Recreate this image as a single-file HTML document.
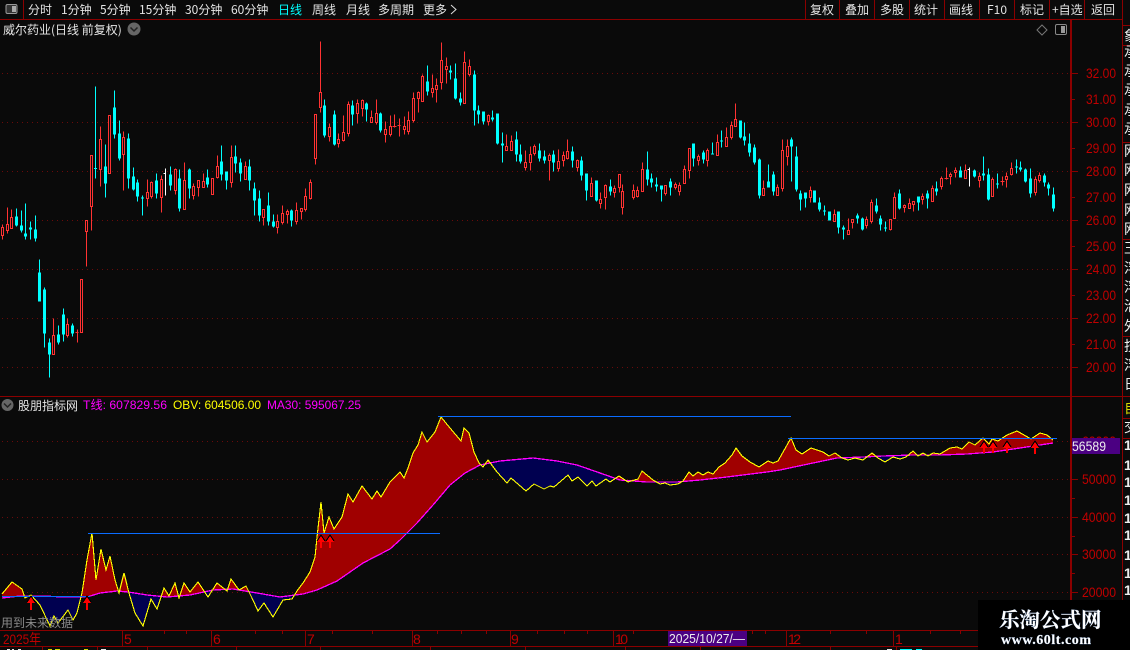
<!DOCTYPE html>
<html><head><meta charset="utf-8"><style>
html,body{margin:0;padding:0;background:#0a0a0a;width:1130px;height:650px;overflow:hidden}
svg{display:block;position:absolute;left:0;top:0}
text{font-family:"Liberation Sans","Noto Sans CJK SC",sans-serif;font-size:12px}
.c{font-family:"WenQuanYi Zen Hei","Noto Sans CJK SC","Liberation Sans",sans-serif;fill:#e4e4e4;font-size:12px}
.a{fill:#c00000;font-size:14px}
.w{font-family:"WenQuanYi Zen Hei","Noto Sans CJK SC",sans-serif;fill:#eee;font-size:14px}
</style></head><body>
<svg width="1130" height="650" viewBox="0 0 1130 650">
<defs>
<clipPath id="am"><path d="M2 598L20 596L40 596L67 597L87 597L100 593L117 591L128 592L147 595L167 597L190 595L213 590L233 589L257 593L280 597L303 594L317 590L337 581L363 563L390 549L400 540L417 523L433 505L450 485L465 473L480 465L500 461L533 458L557 461L577 465L600 473L620 480L647 482L677 482L700 480L727 477L767 472L780 470L813 463L837 458L863 457L883 456L913 455L940 455L967 454L993 452L1020 448L1053 443V397H2Z"/></clipPath>
<clipPath id="bm"><path d="M2 598L20 596L40 596L67 597L87 597L100 593L117 591L128 592L147 595L167 597L190 595L213 590L233 589L257 593L280 597L303 594L317 590L337 581L363 563L390 549L400 540L417 523L433 505L450 485L465 473L480 465L500 461L533 458L557 461L577 465L600 473L620 480L647 482L677 482L700 480L727 477L767 472L780 470L813 463L837 458L863 457L883 456L913 455L940 455L967 454L993 452L1020 448L1053 443V630H2Z"/></clipPath>
</defs>
<rect width="1130" height="650" fill="#0a0a0a"/>

<!-- grid -->
<g stroke="#6b0a0a" stroke-dasharray="1 4" fill="none" shape-rendering="crispEdges">
<path d="M2 73.500H1070M2 122.500H1070M2 171.500H1070M2 220.500H1070M2 269.500H1070M2 318.500H1070M2 367.500H1070M2 441.500H1070M2 479.500H1070M2 517.500H1070M2 554.500H1070M2 592.500H1070"/>
</g>

<!-- candles -->
<g transform="translate(.5 .5)" fill="none" shape-rendering="crispEdges">
<path stroke="#00ffff" d="M16 208V226M21 210V232M25 203V239M30 221V239M35 215V241M39 259V301M44 287V347M49 338V377M58 325V344M63 308V341M72 323V336M95 86V178M105 144V197M114 90V138M119 120V160M128 133V188M133 167V190M137 179V201M142 195V215M156 173V198M170 166V190M179 169V211M189 168V198M207 169V187M221 145V180M226 171V189M235 145V172M240 158V181M249 159V190M254 182V215M259 190V221M268 192V225M273 214V227M291 209V226M324 99V137M334 110V145M352 100V125M366 102V121M380 112V132M427 65V95M450 65V79M455 63V99M460 92V105M474 70V125M478 105V123M483 111V124M492 110V121M497 113V144M502 132V162M516 131V161M520 144V163M539 143V161M544 150V163M553 150V171M572 146V167M581 156V180M586 173V200M596 180V201M610 179V195M647 151V185M651 173V187M656 177V191M661 185V201M670 178V195M693 143V166M703 150V163M712 142V154M721 130V147M740 120V138M744 122V145M749 133V156M754 144V164M759 158V198M768 164V187M773 171V195M791 137V181M796 146V191M800 190V210M805 192V207M814 190V202M819 197V211M824 205V215M838 211V233M843 225V239M857 213V223M862 217V230M876 198V213M880 215V230M885 221V231M899 189V209M918 196V210M927 190V208M936 181V195M960 166V177M974 169V177M983 156V180M988 168V200M997 173V188M1016 159V173M1020 161V171M1025 168V182M1030 168V197M1044 173V186M1048 182V195M1053 187V211"/>
<path stroke="#00ffff" stroke-width="3" d="M16 216V225M21 225V230M25 233V236M30 227V229M35 229V238M39 272V301M44 289V333M49 342V354M58 334V342M63 314V334M72 325V333M95 167.500V168.500M105 166V183M114 107V134M119 133V158M128 138V178M133 176V189M137 182V196M142 197V198M156 180V193M170 174V185M179 178V208M189 169V188M207 177V184M221 161V174M226 171V180M235 156V163M240 162V173M249 166V180M254 188V200M259 198V215M268 205V221M273 221V226M291 210V220M324 105V135M334 114V144M352 105V114M366 103V109M380 113V130M427 81V91M450 70V72M455 78V98M460 98V102M474 74V110M478 110V114M483 111V121M492 117V119M497 113V143M502 143V145M516 139V154M520 154V161M539 150V158M544 156V160M553 154V162M572 151V160M581 160V175M586 173V190M596 180V200M610 186V191M647 169V179M651 178V182M656 184V186M661 185V189M670 181V187M693 143V158M703 152V159M712 153V154M721 140V141M740 120V137M744 136V140M749 143V152M754 147V162M759 159V195M768 181V187M773 174V191M791 139V146M796 156V189M800 193V199M805 192V198M814 190V202M819 202V209M824 210V211M829 211V220M838 211V227M843 227V229M857 215V218M862 218V229M876 205V211M880 218V224M885 227V228M899 193V208M918 196V202M927 193V198M936 188V191M960 170V177M974 170V176M983 173V175M988 174V199M997 183V184M1016 166V167M1020 167V169M1025 169V181M1030 178V193M1044 175V182M1048 184V188M1053 194V208"/>
<path stroke="#ffffff" d="M165 168V195M163 173H165M969 167V186M967 169H969"/>
<path stroke="#ff3232" d="M2 224V239M7 207V233M11 209V228M53 318V354M67 318V337M77 329V342M75 332H78M81 279V332M86 220V266M91 155V230M100 126V186M109 115V173M123 131V190M147 179V206M151 181V198M161 175V212M175 168V194M184 162V209M193 183V199M198 180V196M203 173V187M212 178V194M217 155V178M231 145V187M245 161V179M263 209V225M277 214V233M282 205V224M287 209V223M296 202V224M301 208V219M305 188V211M310 179V199M315 114V164M320 41V112M329 123V141M338 133V147M343 115V141M348 101V136M357 99V123M362 99V116M371 110V122M376 99V124M385 121V142M390 115V136M394 114V127M392 126H396M399 118V136M397 125H400M404 116V134M408 111V134M413 92V122M418 91V112M422 74V101M432 74V97M436 78V102M441 42V89M446 57V83M464 51V103M469 59V76M488 114V125M506 134V150M511 135V150M525 150V170M530 146V170M534 144V155M549 153V180M558 149V171M563 151V166M567 139V159M577 159V171M591 177V196M600 192V208M605 184V209M614 185V197M619 174V192M622 184V214M633 184V199M637 186V197M642 162V191M665 185V195M675 182V189M679 182V195M684 165V183M689 148V178M698 154V165M707 148V166M717 134V155M726 127V146M731 121V139M735 103V126M763 180V195M777 184V195M782 139V191M787 139V165M810 186V202M834 209V221M848 218V234M852 219V228M866 216V228M871 199V223M890 219V230M894 192V218M904 204V212M909 198V208M913 201V211M922 193V204M932 185V201M941 176V189M946 167V179M944 178H948M950 172V184M955 167V177M965 164V178M979 172V187M992 177V196M1002 176V185M1000 181H1004M1006 172V187M1011 162V175M1035 176V195M1039 172V182"/>
<path stroke="#ff3232" fill="#0a0a0a" d="M1 227h2v8h-2zM6 224h2v6h-2zM10 217h2v11h-2zM52 335h2v19h-2zM66 324h2v11h-2zM80 279h2v53h-2zM85 220h2v11h-2zM90 155h2v51h-2zM99 139h2v30h-2zM108 115h2v58h-2zM122 137h2v17h-2zM146 192h2v6h-2zM150 182h2v14h-2zM160 179h2v18h-2zM174 169h2v21h-2zM183 180h2v29h-2zM192 186h2v9h-2zM197 180h2v7h-2zM202 181h2v6h-2zM211 178h2v16h-2zM216 166h2v11h-2zM230 157h2v25h-2zM244 166h2v13h-2zM262 209h2v8h-2zM276 221h2v6h-2zM281 213h2v9h-2zM286 211h2v3h-2zM295 210h2v11h-2zM300 208h2v3h-2zM304 196h2v13h-2zM309 182h2v16h-2zM314 114h2v44h-2zM319 92h2v15h-2zM328 127h2v9h-2zM337 139h2v4h-2zM342 132h2v8h-2zM347 104h2v29h-2zM356 103h2v10h-2zM361 100h2v8h-2zM370 117h2v5h-2zM375 113h2v9h-2zM384 129h2v5h-2zM389 126h2v8h-2zM403 126h2v3h-2zM407 120h2v11h-2zM412 98h2v22h-2zM417 92h2v6h-2zM421 76h2v25h-2zM431 88h2v4h-2zM435 85h2v4h-2zM440 60h2v22h-2zM445 66h2v3h-2zM463 62h2v41h-2zM468 66h2v8h-2zM487 115h2v6h-2zM505 146h2v4h-2zM510 141h2v9h-2zM524 162h2v5h-2zM529 154h2v8h-2zM533 146h2v7h-2zM548 155h2v5h-2zM557 161h2v7h-2zM562 155h2v5h-2zM566 151h2v7h-2zM576 160h2v7h-2zM590 183h2v13h-2zM599 199h2v4h-2zM604 185h2v12h-2zM613 188h2v4h-2zM618 174h2v13h-2zM621 191h2v16h-2zM632 190h2v7h-2zM636 190h2v6h-2zM641 169h2v22h-2zM664 185h2v8h-2zM674 184h2v3h-2zM678 185h2v6h-2zM683 169h2v14h-2zM688 148h2v22h-2zM697 156h2v4h-2zM706 150h2v10h-2zM716 142h2v13h-2zM725 137h2v9h-2zM730 125h2v12h-2zM734 119h2v7h-2zM762 188h2v7h-2zM776 187h2v8h-2zM781 150h2v38h-2zM786 146h2v10h-2zM809 190h2v7h-2zM833 214h2v7h-2zM847 230h2v4h-2zM851 219h2v3h-2zM865 219h2v6h-2zM870 202h2v19h-2zM889 219h2v10h-2zM893 197h2v21h-2zM903 205h2v2h-2zM908 203h2v5h-2zM912 201h2v3h-2zM921 196h2v3h-2zM931 188h2v13h-2zM940 178h2v8h-2zM949 174h2v2h-2zM954 170h2v2h-2zM964 170h2v8h-2zM978 176h2v4h-2zM991 179h2v17h-2zM1005 176h2v3h-2zM1010 168h2v6h-2zM1034 179h2v13h-2zM1038 175h2v5h-2z"/>
</g>

<!-- indicator fills -->
<g shape-rendering="crispEdges">
<path clip-path="url(#am)" fill="#a00000" d="M2 594L12 582L22 589L25 598L31 595L40 605L50 626L54 616L58 623L68 610L73 620L77 613L82 593L87 560L92 533L96 580L101 549L106 570L110 556L115 580L119 593L124 573L129 593L135 613L143 626L151 599L157 609L164 588L169 596L175 583L179 598L184 583L190 592L198 582L208 597L217 583L227 591L231 579L239 590L246 586L252 598L258 611L264 603L273 617L283 600L292 599L297 591L303 583L310 572L315 557L317 537L321 502L324 533L329 517L334 529L342 517L348 494L353 502L362 486L372 499L377 491L381 497L390 482L400 472L404 478L408 468L413 453L418 445L422 432L427 442L435 432L441 417L450 428L461 441L464 428L469 433L474 452L479 463L483 467L488 460L497 472L507 483L511 478L526 491L534 484L544 489L550 486L554 487L568 475L572 481L578 477L587 486L592 481L596 486L606 479L610 482L619 476L628 482L638 479L642 471L653 480L660 484L665 483L670 485L678 484L683 481L689 472L693 476L698 472L703 475L708 472L713 474L719 467L725 463L732 455L736 448L742 456L750 462L759 467L768 461L773 463L778 461L791 438L796 450L802 454L811 448L823 452L829 456L835 453L842 458L848 460L855 458L863 460L872 453L878 458L885 462L893 457L900 459L906 457L913 451L918 456L923 453L928 456L933 453L940 454L950 448L957 447L962 449L969 442L975 445L983 438L989 444L992 439L998 441L1007 435L1017 431L1031 439L1040 433L1047 435L1053 440V630H2Z"/>
<path clip-path="url(#bm)" fill="#000050" d="M2 594L12 582L22 589L25 598L31 595L40 605L50 626L54 616L58 623L68 610L73 620L77 613L82 593L87 560L92 533L96 580L101 549L106 570L110 556L115 580L119 593L124 573L129 593L135 613L143 626L151 599L157 609L164 588L169 596L175 583L179 598L184 583L190 592L198 582L208 597L217 583L227 591L231 579L239 590L246 586L252 598L258 611L264 603L273 617L283 600L292 599L297 591L303 583L310 572L315 557L317 537L321 502L324 533L329 517L334 529L342 517L348 494L353 502L362 486L372 499L377 491L381 497L390 482L400 472L404 478L408 468L413 453L418 445L422 432L427 442L435 432L441 417L450 428L461 441L464 428L469 433L474 452L479 463L483 467L488 460L497 472L507 483L511 478L526 491L534 484L544 489L550 486L554 487L568 475L572 481L578 477L587 486L592 481L596 486L606 479L610 482L619 476L628 482L638 479L642 471L653 480L660 484L665 483L670 485L678 484L683 481L689 472L693 476L698 472L703 475L708 472L713 474L719 467L725 463L732 455L736 448L742 456L750 462L759 467L768 461L773 463L778 461L791 438L796 450L802 454L811 448L823 452L829 456L835 453L842 458L848 460L855 458L863 460L872 453L878 458L885 462L893 457L900 459L906 457L913 451L918 456L923 453L928 456L933 453L940 454L950 448L957 447L962 449L969 442L975 445L983 438L989 444L992 439L998 441L1007 435L1017 431L1031 439L1040 433L1047 435L1053 440V397H2Z"/>
<path fill="none" stroke="#ff00ff" stroke-width="1.300" d="M2 598L20 596L40 596L67 597L87 597L100 593L117 591L128 592L147 595L167 597L190 595L213 590L233 589L257 593L280 597L303 594L317 590L337 581L363 563L390 549L400 540L417 523L433 505L450 485L465 473L480 465L500 461L533 458L557 461L577 465L600 473L620 480L647 482L677 482L700 480L727 477L767 472L780 470L813 463L837 458L863 457L883 456L913 455L940 455L967 454L993 452L1020 448L1053 443"/>
<path fill="none" stroke="#ffff00" stroke-width="1.100" d="M2 594L12 582L22 589L25 598L31 595L40 605L50 626L54 616L58 623L68 610L73 620L77 613L82 593L87 560L92 533L96 580L101 549L106 570L110 556L115 580L119 593L124 573L129 593L135 613L143 626L151 599L157 609L164 588L169 596L175 583L179 598L184 583L190 592L198 582L208 597L217 583L227 591L231 579L239 590L246 586L252 598L258 611L264 603L273 617L283 600L292 599L297 591L303 583L310 572L315 557L317 537L321 502L324 533L329 517L334 529L342 517L348 494L353 502L362 486L372 499L377 491L381 497L390 482L400 472L404 478L408 468L413 453L418 445L422 432L427 442L435 432L441 417L450 428L461 441L464 428L469 433L474 452L479 463L483 467L488 460L497 472L507 483L511 478L526 491L534 484L544 489L550 486L554 487L568 475L572 481L578 477L587 486L592 481L596 486L606 479L610 482L619 476L628 482L638 479L642 471L653 480L660 484L665 483L670 485L678 484L683 481L689 472L693 476L698 472L703 475L708 472L713 474L719 467L725 463L732 455L736 448L742 456L750 462L759 467L768 461L773 463L778 461L791 438L796 450L802 454L811 448L823 452L829 456L835 453L842 458L848 460L855 458L863 460L872 453L878 458L885 462L893 457L900 459L906 457L913 451L918 456L923 453L928 456L933 453L940 454L950 448L957 447L962 449L969 442L975 445L983 438L989 444L992 439L998 441L1007 435L1017 431L1031 439L1040 433L1047 435L1053 440"/>
<rect x="2" y="596" width="88" height="1" fill="#0a6cff"/>
<rect x="88" y="533" width="352" height="1" fill="#0a6cff"/>
<rect x="438" y="416" width="353" height="1" fill="#0a6cff"/>
<rect x="788" y="438" width="269" height="1" fill="#0a6cff"/>
<!-- arrows -->
<path fill="none" stroke="#000" d="M27 602L31 596L35 602M83 602L87 596L91 602M317 541L321 535L325 541M326 541L330 535L334 541M980 447L984 441L988 447M989 447L993 441L997 447M1003 447L1007 441L1011 447M1031 447L1035 441L1039 447"/>
<path fill="#ff0000" d="M27 603L31 597L35 603H32V610H30V603ZM83 603L87 597L91 603H88V610H86V603ZM317 542L321 536L325 542H322V548H320V542ZM326 542L330 536L334 542H331V548H329V542ZM980 448L984 442L988 448H985V453H983V448ZM989 448L993 442L997 448H994V453H992V448ZM1003 448L1007 442L1011 448H1008V453H1006V448ZM1031 448L1035 442L1039 448H1036V454H1034V448Z"/>
</g>

<!-- frame -->
<g stroke="#8b0000" fill="none" shape-rendering="crispEdges">
<path d="M0 19.500H1122M0 396.500H1130M0 630.500H1071M0 646.500H1071M23.500 0V19M805.500 0V19M839.500 0V19M874.500 0V19M909.500 0V19M944.500 0V19M979.500 0V19M1014.500 0V19M1049.500 0V19M1084.500 0V19M1122.500 0V650"/>
<path stroke-width="2" d="M1071 20V650"/>
<path d="M1072 73.500H1078M1072 99.500H1075M1072 122.500H1078M1072 148.500H1075M1072 171.500H1078M1072 197.500H1075M1072 220.500H1078M1072 246.500H1075M1072 269.500H1078M1072 295.500H1075M1072 318.500H1078M1072 344.500H1075M1072 367.500H1078M1072 479.500H1078M1072 498.500H1075M1072 517.500H1078M1072 536.500H1075M1072 554.500H1078M1072 573.500H1075M1072 592.500H1078"/>
<path d="M122.500 631V646M211.500 631V646M305.500 631V646M412.500 631V646M510.500 631V646M613.500 631V646M786.500 631V646M893.500 631V646M42.500 646V650M97.500 646V650M147.500 646V650M236.500 646V650M320.500 646V650M430.500 646V650M525.500 646V650M625.500 646V650M700.500 646V650M830.500 646V650M896.500 646V650M164.500 631V634M186.500 631V634M255.500 631V634M282.500 631V634M332.500 631V634M372.500 631V634M437.500 631V634M461.500 631V634M486.500 631V634M537.500 631V634M564.500 631V634M587.500 631V634M633.500 631V634M684.500 631V634M752.500 631V634M765.500 631V634M830.500 631V634M866.500 631V634M930.500 631V634M960.500 631V634"/>
<path d="M1122 25.500H1130M1122 45.500H1130M1122 142.500H1130M1122 239.500H1130M1122 336.500H1130M1122 418.500H1130M1122 438.500H1130"/>
</g>

<!-- top bar -->
<rect x="6" y="4.500" width="11" height="9" rx="1.500" fill="#333" stroke="#999"/><rect x="12" y="6" width="4" height="6" fill="#aaa"/>
<text class="c" x="28" y="14">分时</text>
<text class="c" x="61" y="14">1分钟</text>
<text class="c" x="100" y="14">5分钟</text>
<text class="c" x="139" y="14">15分钟</text>
<text class="c" x="185" y="14">30分钟</text>
<text class="c" x="231" y="14">60分钟</text>
<text class="c" x="278" y="14" style="fill:#00ffff">日线</text>
<text class="c" x="312" y="14">周线</text>
<text class="c" x="346" y="14">月线</text>
<text class="c" x="378" y="14">多周期</text>
<text class="c" x="423" y="14">更多</text>
<path d="M451 5L456 9.500L451 14" fill="none" stroke="#ddd"/>
<text class="c" x="810" y="14">复权</text>
<text class="c" x="845" y="14">叠加</text>
<text class="c" x="880" y="14">多股</text>
<text class="c" x="914" y="14">统计</text>
<text class="c" x="949" y="14">画线</text>
<text class="c" x="987" y="14" textLength="20">F10</text>
<text class="c" x="1020" y="14">标记</text>
<text class="c" x="1052" y="14">+自选</text>
<text class="c" x="1091" y="14">返回</text>

<!-- title -->
<text class="c" x="3" y="34">威尔药业(日线 前复权)</text>
<circle cx="134" cy="29" r="6.500" fill="#666"/><path d="M130.500 27.500L134 31L137.500 27.500" fill="none" stroke="#222" stroke-width="1.500"/>
<path d="M1042 25L1047 30L1042 35L1037 30Z" fill="none" stroke="#777"/>
<rect x="1055.500" y="24.500" width="11" height="10" rx="1.500" fill="none" stroke="#888"/><rect x="1061" y="26" width="4" height="7" fill="#999"/>

<!-- price axis -->
<g class="a">
<text class="a" x="1086" y="78" textLength="30" lengthAdjust="spacingAndGlyphs">32.00</text>
<text class="a" x="1086" y="104" textLength="30" lengthAdjust="spacingAndGlyphs">31.00</text>
<text class="a" x="1086" y="127" textLength="30" lengthAdjust="spacingAndGlyphs">30.00</text>
<text class="a" x="1086" y="153" textLength="30" lengthAdjust="spacingAndGlyphs">29.00</text>
<text class="a" x="1086" y="176" textLength="30" lengthAdjust="spacingAndGlyphs">28.00</text>
<text class="a" x="1086" y="202" textLength="30" lengthAdjust="spacingAndGlyphs">27.00</text>
<text class="a" x="1086" y="225" textLength="30" lengthAdjust="spacingAndGlyphs">26.00</text>
<text class="a" x="1086" y="251" textLength="30" lengthAdjust="spacingAndGlyphs">25.00</text>
<text class="a" x="1086" y="274" textLength="30" lengthAdjust="spacingAndGlyphs">24.00</text>
<text class="a" x="1086" y="300" textLength="30" lengthAdjust="spacingAndGlyphs">23.00</text>
<text class="a" x="1086" y="323" textLength="30" lengthAdjust="spacingAndGlyphs">22.00</text>
<text class="a" x="1086" y="349" textLength="30" lengthAdjust="spacingAndGlyphs">21.00</text>
<text class="a" x="1086" y="372" textLength="30" lengthAdjust="spacingAndGlyphs">20.00</text>
<text class="a" x="1082" y="446" textLength="34" lengthAdjust="spacingAndGlyphs">60000</text>
<text class="a" x="1082" y="484" textLength="34" lengthAdjust="spacingAndGlyphs">50000</text>
<text class="a" x="1082" y="522" textLength="34" lengthAdjust="spacingAndGlyphs">40000</text>
<text class="a" x="1082" y="559" textLength="34" lengthAdjust="spacingAndGlyphs">30000</text>
<text class="a" x="1082" y="597" textLength="34" lengthAdjust="spacingAndGlyphs">20000</text>
</g>
<rect x="1072" y="438" width="48" height="16" fill="#4b0082"/>
<text x="1072" y="451" style="font-size:14px;fill:#eee" textLength="34" lengthAdjust="spacingAndGlyphs">56589</text>

<!-- right strip: glyphs clipped by the canvas edge -->
<text class="w" x="1124" y="41">象</text>
<text class="w" x="1124" y="57">承</text><text class="w" x="1124" y="76">承</text><text class="w" x="1124" y="95">承</text><text class="w" x="1124" y="115">承</text><text class="w" x="1124" y="134">承</text>
<text class="w" x="1124" y="156">网</text><text class="w" x="1124" y="175">网</text><text class="w" x="1124" y="195">网</text><text class="w" x="1124" y="215">网</text><text class="w" x="1124" y="234">网</text>
<text class="w" x="1124" y="253">玉</text><text class="w" x="1124" y="273">浮</text><text class="w" x="1124" y="292">浮</text><text class="w" x="1124" y="311">治</text><text class="w" x="1124" y="331">外</text>
<text class="w" x="1124" y="351">技</text><text class="w" x="1124" y="370">浮</text><text class="w" x="1124" y="389">日</text>
<text class="w" x="1124" y="413" style="fill:#d8d800">自</text>
<text class="w" x="1124" y="432">交</text>
<text x="1124" y="450" style="font-size:14px;fill:#eee;font-weight:bold">1</text><text x="1124" y="470" style="font-size:14px;fill:#eee;font-weight:bold">1</text><text x="1124" y="487" style="font-size:14px;fill:#eee;font-weight:bold">1</text><text x="1124" y="505" style="font-size:14px;fill:#eee;font-weight:bold">1</text><text x="1124" y="523" style="font-size:14px;fill:#eee;font-weight:bold">1</text><text x="1124" y="540" style="font-size:14px;fill:#eee;font-weight:bold">1</text><text x="1124" y="560" style="font-size:14px;fill:#eee;font-weight:bold">1</text><text x="1124" y="578" style="font-size:14px;fill:#eee;font-weight:bold">1</text><text x="1124" y="595" style="font-size:14px;fill:#eee;font-weight:bold">1</text>

<!-- indicator header -->
<circle cx="7.500" cy="405" r="6" fill="#666"/><path d="M4 403.500L7.500 407L11 403.500" fill="none" stroke="#222" stroke-width="1.500"/>
<text class="c" x="18" y="410">股朋指标网</text>
<text x="83" y="409" style="fill:#ff00ff;font-size:12px" textLength="84" lengthAdjust="spacingAndGlyphs">T线: 607829.56</text>
<text x="173" y="409" style="fill:#ffff00;font-size:12px" textLength="88" lengthAdjust="spacingAndGlyphs">OBV: 604506.00</text>
<text x="267" y="409" style="fill:#ff00ff;font-size:12px" textLength="94" lengthAdjust="spacingAndGlyphs">MA30: 595067.25</text>
<text class="c" x="1" y="627" style="fill:#8a8a8a">用到未来数据</text>

<!-- time axis -->
<g>
<text class="a" x="3" y="644" textLength="38" lengthAdjust="spacingAndGlyphs">2025年</text>
<text class="a" x="124" y="644">5</text>
<text class="a" x="213" y="644">6</text>
<text class="a" x="307" y="644">7</text>
<text class="a" x="413" y="644">8</text>
<text class="a" x="511" y="644">9</text>
<text class="a" x="615" y="644" textLength="13">10</text>
<text class="a" x="788" y="644" textLength="13">12</text>
<text class="a" x="895" y="644">1</text>
</g>
<rect x="668" y="631" width="79" height="15" fill="#4b0082"/>
<text x="669" y="643" style="font-size:13px;fill:#eee" textLength="76" lengthAdjust="spacingAndGlyphs">2025/10/27/—</text>

<!-- clipped bottom row -->
<g shape-rendering="crispEdges">
<path stroke="#e8e8e8" d="M7 649.500H10M12 649.500H14M18 649.500H21M101 649.500H106M887 649.500H892"/>
<path stroke="#d8d800" d="M48 649.500H52M55 649.500H60M84 649.500H88"/>
<path stroke="#00ffff" d="M900 649.500H912M916 649.500H922"/>
</g>

<!-- watermark -->
<rect x="978" y="600" width="152" height="50" fill="#000"/>
<text x="999" y="627" style="font-family:'Noto Serif CJK SC','Noto Sans CJK SC',serif;font-size:20.500px;font-weight:bold;fill:#fff;stroke:#5a7fb0;stroke-width:.4;paint-order:stroke">乐淘公式网</text>
<text x="1001" y="644" style="font-family:'Liberation Serif',serif;font-size:14px;font-weight:bold;fill:#fff;stroke:#5a7fb0;stroke-width:.4;paint-order:stroke" textLength="90">www.60lt.com</text>
</svg>
</body></html>
